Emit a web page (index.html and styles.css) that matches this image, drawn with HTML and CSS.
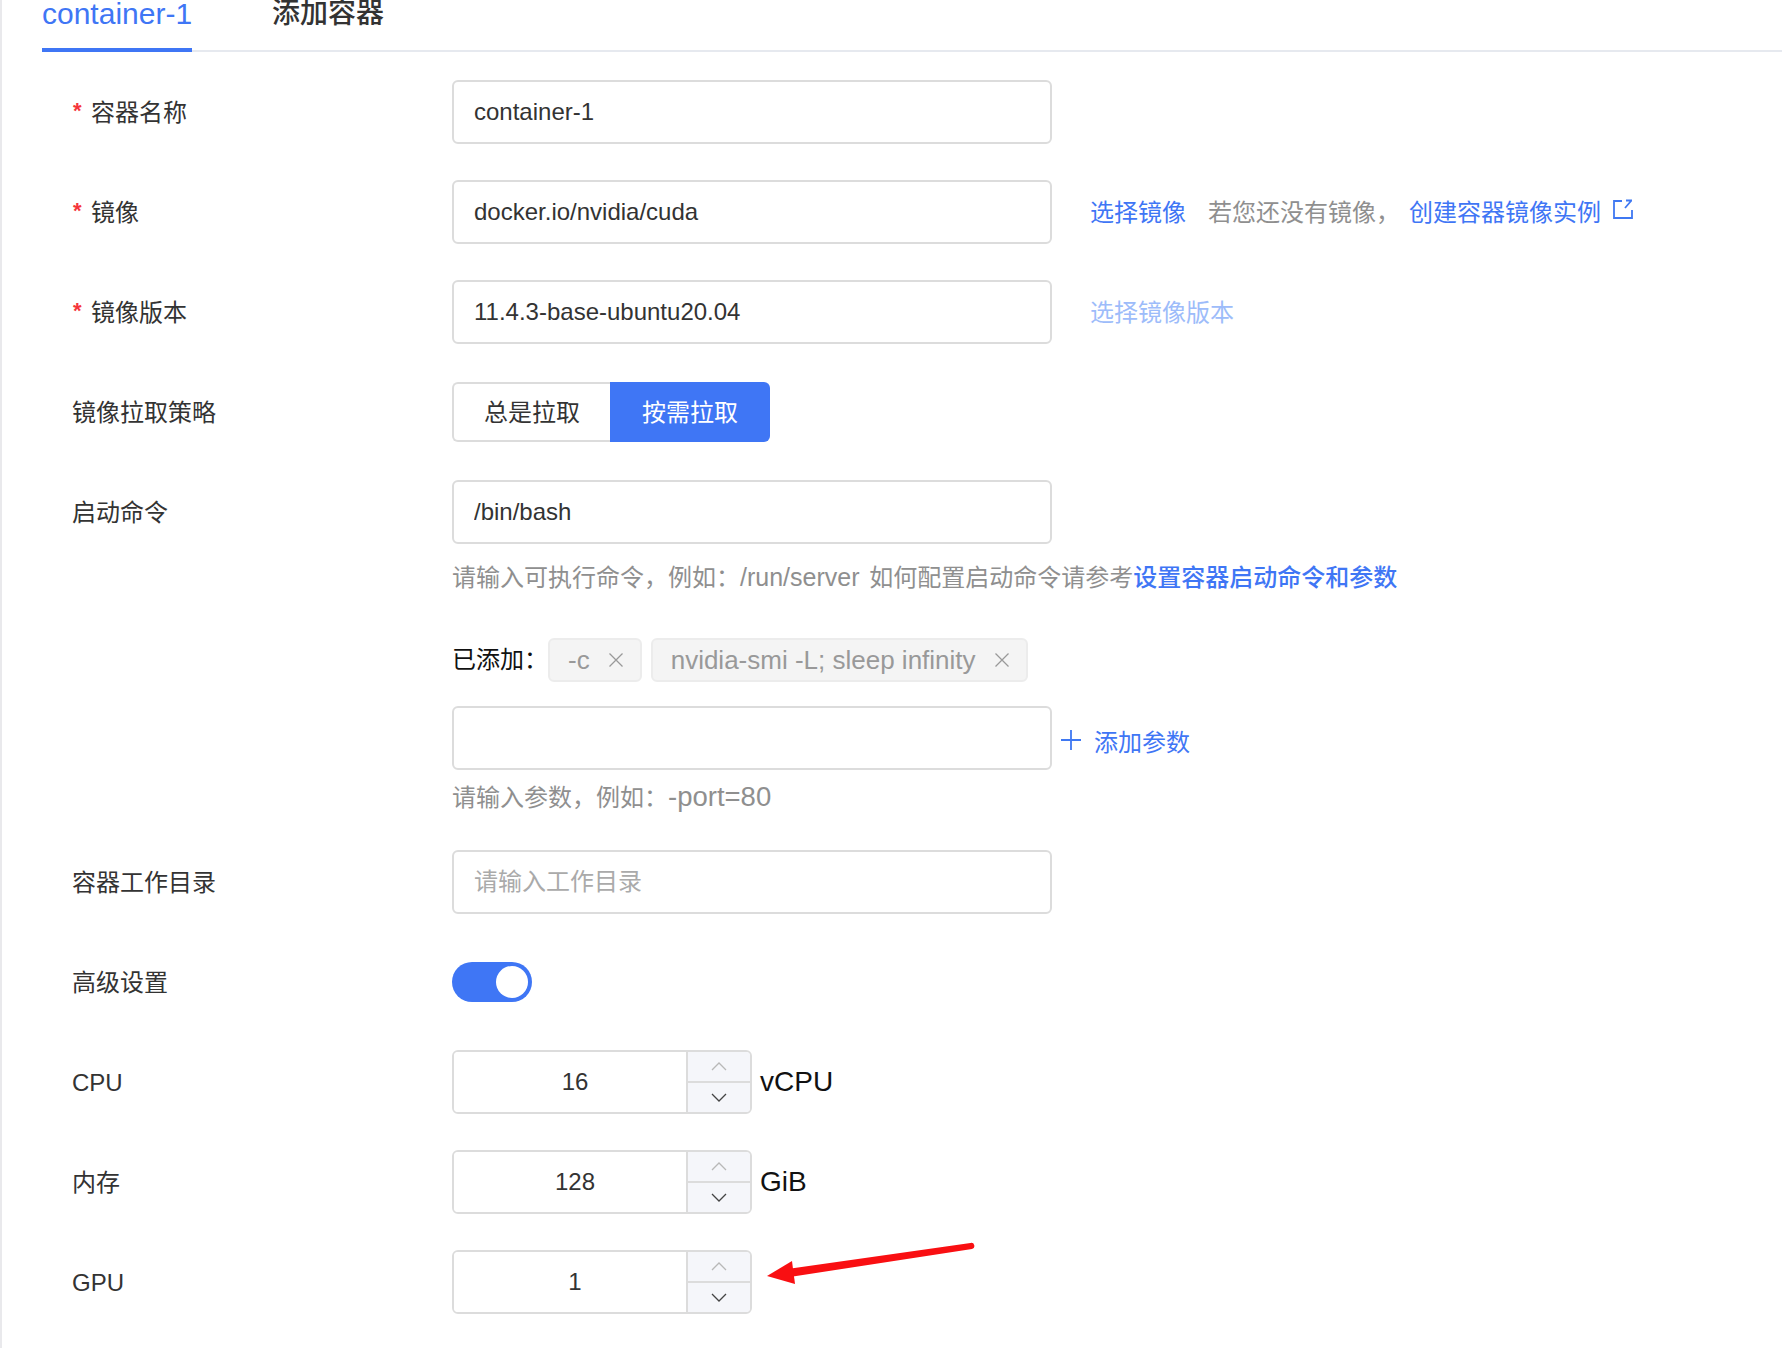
FILE: index.html
```html
<!DOCTYPE html>
<html lang="zh-CN">
<head>
<meta charset="utf-8">
<title>容器配置</title>
<link rel="stylesheet" href="styles.css">
</head>
<body>
<div class="page">
  <nav class="tabs">
    <a class="tab tab-active">container-1</a>
    <a class="tab tab-add">添加容器</a>
  </nav>
  <form class="form">
    <div class="row">
      <label class="label required">容器名称</label>
      <div class="field"><input class="input" value="container-1"></div>
    </div>
    <div class="row">
      <label class="label required">镜像</label>
      <div class="field">
        <input class="input" value="docker.io/nvidia/cuda">
        <div class="aside">
          <a class="link">选择镜像</a>
          <span class="muted note">若您还没有镜像，</span>
          <a class="link">创建容器镜像实例</a>
          <svg class="ext" viewBox="0 0 22 21" fill="none" stroke="#3f78f2" stroke-width="1.8"><path d="M10 2H2v17h18V11"/><path d="M13 9l6-7M14 1.500h6"/></svg>
        </div>
      </div>
    </div>
    <div class="row">
      <label class="label required">镜像版本</label>
      <div class="field">
        <input class="input" value="11.4.3-base-ubuntu20.04">
        <div class="aside"><a class="link link-disabled">选择镜像版本</a></div>
      </div>
    </div>
    <div class="row">
      <label class="label">镜像拉取策略</label>
      <div class="field">
        <div class="radio">
          <span class="radio-item">总是拉取</span>
          <span class="radio-item radio-on">按需拉取</span>
        </div>
      </div>
    </div>
    <div class="row row-top">
      <label class="label">启动命令</label>
      <div class="stack">
        <input class="input" value="/bin/bash">
        <p class="hint hint-cmd">请输入可执行命令，例如：<span class="hint-path">/run/server</span> 如何配置启动命令请参考<a class="link-strong">设置容器启动命令和参数</a></p>
        <div class="added">
          <span class="added-label">已添加：</span>
          <span class="tag">-c<svg class="tag-x" viewBox="0 0 16 16" stroke="#999" stroke-width="1.300"><path d="M1.500 1.500l13 13M14.500 1.500l-13 13"/></svg></span>
          <span class="tag">nvidia-smi -L; sleep infinity<svg class="tag-x" viewBox="0 0 16 16" stroke="#999" stroke-width="1.300"><path d="M1.500 1.500l13 13M14.500 1.500l-13 13"/></svg></span>
        </div>
        <div class="field">
          <input class="input" value="">
          <a class="add-param"><svg class="plus" viewBox="0 0 20 20" stroke="#3f78f2" stroke-width="1.800"><path d="M10 0v20M0 10h20"/></svg>添加参数</a>
        </div>
        <p class="hint hint-param">请输入参数，例如：<span class="hint-flag">-port=80</span></p>
      </div>
    </div>
    <div class="row">
      <label class="label">容器工作目录</label>
      <div class="field"><input class="input" placeholder="请输入工作目录"></div>
    </div>
    <div class="row">
      <label class="label">高级设置</label>
      <div class="field"><span class="switch"><span class="knob"></span></span></div>
    </div>
    <div class="row">
      <label class="label">CPU</label>
      <div class="field">
        <div class="number">
          <input class="number-input" value="16">
          <div class="steps">
            <span class="step"><svg class="chev" viewBox="0 0 16 9" fill="none" stroke="#b8b8b8" stroke-width="1.300"><path d="M1 8l7-7 7 7"/></svg></span>
            <span class="step"><svg class="chev" viewBox="0 0 16 9" fill="none" stroke="#444" stroke-width="1.300"><path d="M1 1l7 7 7-7"/></svg></span>
          </div>
        </div>
        <span class="unit">vCPU</span>
      </div>
    </div>
    <div class="row">
      <label class="label">内存</label>
      <div class="field">
        <div class="number">
          <input class="number-input" value="128">
          <div class="steps">
            <span class="step"><svg class="chev" viewBox="0 0 16 9" fill="none" stroke="#b8b8b8" stroke-width="1.300"><path d="M1 8l7-7 7 7"/></svg></span>
            <span class="step"><svg class="chev" viewBox="0 0 16 9" fill="none" stroke="#444" stroke-width="1.300"><path d="M1 1l7 7 7-7"/></svg></span>
          </div>
        </div>
        <span class="unit">GiB</span>
      </div>
    </div>
    <div class="row">
      <label class="label">GPU</label>
      <div class="field">
        <div class="number">
          <input class="number-input" value="1">
          <div class="steps">
            <span class="step"><svg class="chev" viewBox="0 0 16 9" fill="none" stroke="#b8b8b8" stroke-width="1.300"><path d="M1 8l7-7 7 7"/></svg></span>
            <span class="step"><svg class="chev" viewBox="0 0 16 9" fill="none" stroke="#444" stroke-width="1.300"><path d="M1 1l7 7 7-7"/></svg></span>
          </div>
        </div>
      </div>
    </div>
  </form>
  <svg class="arrow" viewBox="0 0 210 44" fill="#f90f12"><path d="M205.500 1L26 26.500l2 8 179-27.500a3 3 0 0 0-1.500-6z"/><path d="M2 34l25-15 3 23z"/></svg>
</div>
</body>
</html>
```
FILE: styles.css
```css
* { box-sizing: border-box; }
html, body { margin: 0; padding: 0; background: #fff; }
body {
  width: 1782px;
  height: 1348px;
  overflow: hidden;
  font-family: "Liberation Sans", "Noto Sans CJK SC", sans-serif;
  font-size: 24px;
  color: #333;
}
.page {
  position: relative;
  height: 1348px;
  border-left: 2px solid #e9e9ec;
  padding-left: 40px;
}
.tabs {
  display: flex;
  height: 52px;
  gap: 80px;
  border-bottom: 2px solid #e6e9ef;
  align-items: flex-start;
}
.tab {
  height: 52px;
  line-height: 28px;
  font-size: 28px;
  color: #333;
  font-weight: 500;
  white-space: nowrap;
}
.tab-active {
  width: 150px;
  font-size: 30px;
  color: #3f76f5;
  border-bottom: 4px solid #3f76f5;
}
.form {
  display: flex;
  flex-direction: column;
  gap: 36px;
  padding-top: 28px;
}
.row {
  display: flex;
  align-items: center;
  min-height: 64px;
}
.row-top { align-items: flex-start; }
.label {
  flex: 0 0 410px;
  padding-left: 30px;
  padding-top: 2px;
  line-height: 62px;
  color: #333;
  position: relative;
}
.required { padding-left: 49px; }
.required::before {
  content: "*";
  position: absolute;
  left: 31px;
  top: 0;
  color: #f5353c;
  font-size: 22px;
  font-weight: 700;
}
.field { display: flex; align-items: center; }
.stack { display: flex; flex-direction: column; }
.input {
  width: 600px;
  height: 64px;
  padding: 0 20px;
  border: 2px solid #dcdcdc;
  border-radius: 6px;
  background: #fff;
  color: #333;
  font: inherit;
  outline: none;
}
.input::placeholder { color: #aaa; opacity: 1; }
.aside { display: flex; align-items: center; margin-left: 38px; margin-bottom: 4px; }
.link { color: #3f76f5; }
.link-disabled { color: #9dbcfa; }
.link-strong { color: #3f76f5; font-weight: 500; }
.muted { color: #8f8f8f; }
.note { margin-left: 22px; margin-right: 9px; }
.ext { width: 22px; height: 21px; margin-left: 11px; margin-top: -1px; }
.radio { display: flex; height: 60px; }
.radio-item {
  display: flex;
  align-items: center;
  padding: 0 30px 4px;
  border: 2px solid #dcdcdc;
  border-right: 0;
  border-radius: 6px 0 0 6px;
}
.radio-on {
  background: #3f76f5;
  border: 0;
  border-radius: 0 6px 6px 0;
  color: #fff;
  padding: 0 32px 4px;
}
.hint { margin: 0; color: #8f8f8f; line-height: 32px; }
.hint-cmd { margin-top: 17px; }
.hint-path { font-size: 25px; margin-right: 3px; }
.hint-param { margin-top: 11px; }
.hint-flag { font-size: 27.5px; }
.added { display: flex; align-items: center; margin-top: 44px; margin-bottom: 24px; height: 44px; }
.added-label { color: #111; width: 96px; margin-bottom: 6px; }
.tag {
  display: flex;
  align-items: center;
  height: 44px;
  padding: 0 16px 0 18px;
  margin-right: 9px;
  border: 2px solid #ececec;
  border-radius: 6px;
  background: #f4f4f4;
  color: #999;
  font-size: 26px;
}
.tag-x { width: 16px; height: 16px; margin-left: 18px; }
.add-param { display: flex; align-items: center; color: #3f76f5; margin-left: 9px; margin-top: 4px; }
.plus { width: 20px; height: 20px; margin-right: 13px; }
.switch {
  display: block;
  position: relative;
  width: 80px;
  height: 40px;
  border-radius: 20px;
  background: #3f76f5;
}
.knob {
  position: absolute;
  right: 4px;
  top: 4px;
  width: 32px;
  height: 32px;
  border-radius: 50%;
  background: #fff;
}
.number {
  display: flex;
  width: 300px;
  height: 64px;
  border: 2px solid #dcdcdc;
  border-radius: 6px;
  overflow: hidden;
}
.number-input {
  flex: 1;
  min-width: 0;
  border: 0;
  padding: 0 0 0 10px;
  text-align: center;
  font: inherit;
  color: #333;
  outline: none;
}
.steps {
  flex: 0 0 64px;
  display: flex;
  flex-direction: column;
  border-left: 2px solid #dcdcdc;
  background: #f5f6fa;
}
.step { flex: 1; display: flex; align-items: center; justify-content: center; }
.step + .step { border-top: 2px solid #dcdcdc; }
.chev { width: 16px; height: 9px; }
.unit { margin-left: 8px; color: #111; font-size: 28px; }
.arrow {
  position: absolute;
  left: 763px;
  top: 1242px;
  width: 210px;
  height: 44px;
}
```
